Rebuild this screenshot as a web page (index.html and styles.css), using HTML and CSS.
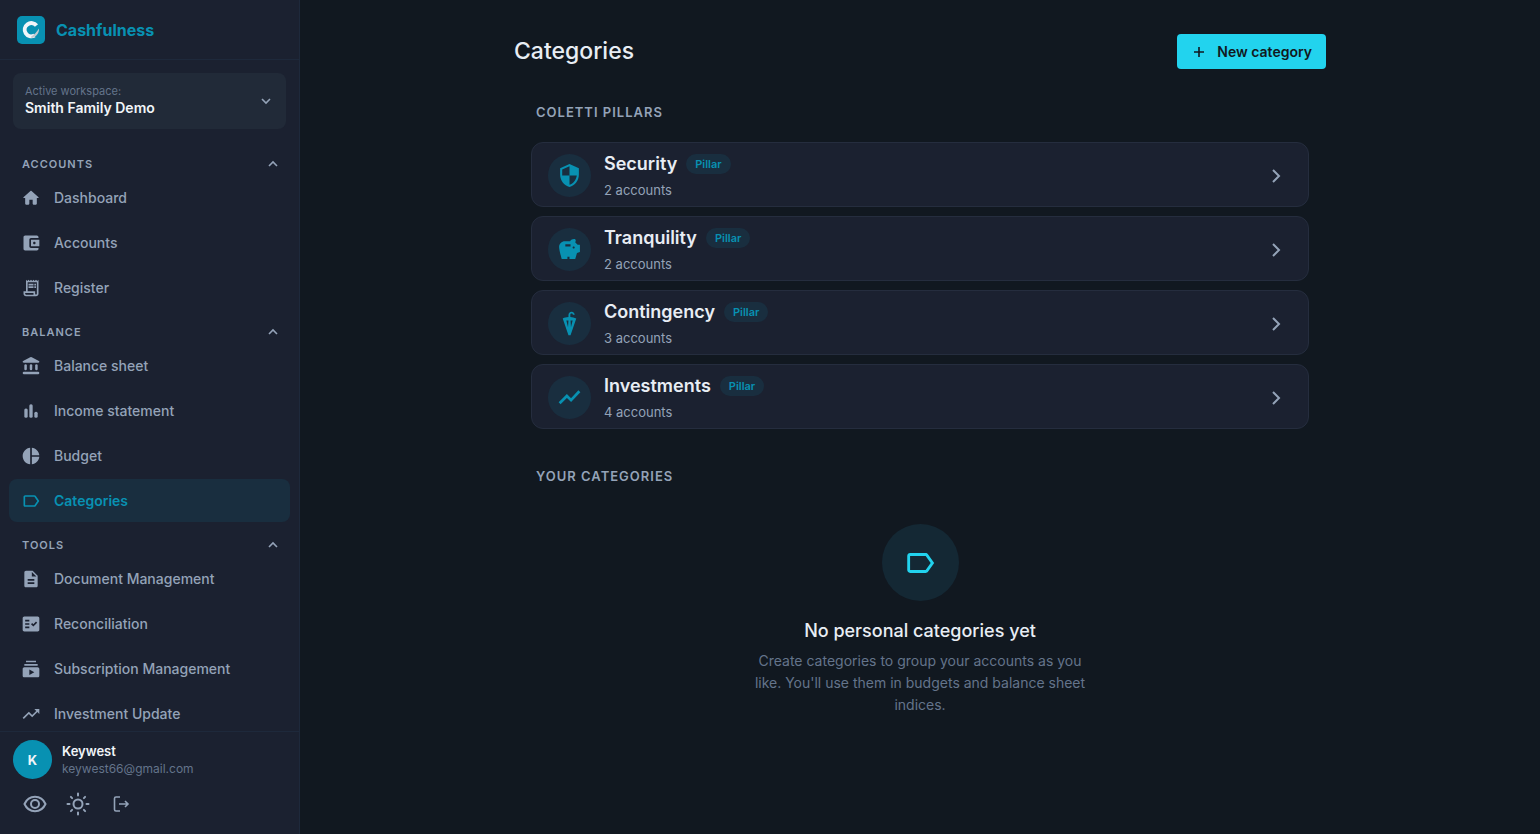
FILE: index.html
```html
<!DOCTYPE html>
<html lang="en">
<head>
<meta charset="utf-8">
<meta name="viewport" content="width=device-width, initial-scale=1">
<title>Categories - Cashfulness</title>
<link rel="stylesheet" href="styles.css">
</head>
<body>
<div class="app">
  <aside class="sidebar">
    <a class="brand" href="#">
      <svg class="brand-logo" viewBox="0 0 28 28" aria-hidden="true">
        <rect width="28" height="28" rx="5" fill="#0891b2"/>
        <path d="M19.500 9.600A6.600 6.600 0 1 0 17.500 19.500" fill="none" stroke="#f1f5f9" stroke-width="4"/>
        <path d="M22 12.500c.2 4.500-2.500 8.500-7.500 9.700l-.3-1.700c3-1.500 5.500-4.500 7.800-8z" fill="#c3cad1"/>
      </svg>
      <span class="brand-name">Cashfulness</span>
    </a>

    <button class="workspace" type="button">
      <span class="workspace-text">
        <span class="workspace-label">Active workspace:</span>
        <span class="workspace-name">Smith Family Demo</span>
      </span>
      <svg class="icon-small" viewBox="0 0 16 16" aria-hidden="true"><path class="line thin" d="M4 6l4 4 4-4"/></svg>
    </button>

    <nav class="nav" aria-label="Main">
      <button class="group-title" type="button"><span>ACCOUNTS</span><svg class="icon-small" viewBox="0 0 16 16" aria-hidden="true"><path class="line thin" d="M4 10l4-4 4 4"/></svg></button>
      <a class="nav-item" href="#"><svg class="icon" viewBox="0 0 24 24" aria-hidden="true"><path d="M10 19v-5h4v5c0 .55.45 1 1 1h3c.55 0 1-.45 1-1v-7h1.700c.46 0 .68-.57.33-.87L12.670 3.600c-.38-.34-.96-.34-1.340 0l-8.360 7.530c-.34.300-.13.870.33.870H5v7c0 .55.45 1 1 1h3c.55 0 1-.45 1-1z"/></svg>Dashboard</a>
      <a class="nav-item" href="#"><svg class="icon" viewBox="0 0 24 24" aria-hidden="true"><path d="M21 18v1c0 1.100-.9 2-2 2H5c-1.110 0-2-.9-2-2V5c0-1.100.89-2 2-2h14c1.100 0 2 .9 2 2v1h-9c-1.110 0-2 .9-2 2v8c0 1.100.89 2 2 2h9zm-9-2h10V8H12v8zm4-2.500c-.83 0-1.500-.67-1.500-1.500s.67-1.500 1.500-1.500 1.500.67 1.500 1.500-.67 1.500-1.500 1.500z"/></svg>Accounts</a>
      <a class="nav-item" href="#"><svg class="icon" viewBox="0 0 24 24" aria-hidden="true"><path d="M19.500 3.500L18 2l-1.500 1.500L15 2l-1.500 1.500L12 2l-1.500 1.500L9 2 7.500 3.500 6 2v14H3v3c0 1.660 1.340 3 3 3h12c1.660 0 3-1.340 3-3V2l-1.500 1.500zM15 20H6c-.55 0-1-.45-1-1v-1h10v2zm4-1c0 .55-.45 1-1 1s-1-.45-1-1v-3H8V5h11v14zM9 7h6v2H9zM16 7h2v2h-2zM9 10h6v2H9zM16 10h2v2h-2z"/></svg>Register</a>

      <button class="group-title" type="button"><span>BALANCE</span><svg class="icon-small" viewBox="0 0 16 16" aria-hidden="true"><path class="line thin" d="M4 10l4-4 4 4"/></svg></button>
      <a class="nav-item" href="#"><svg class="icon" viewBox="0 0 24 24" aria-hidden="true"><rect x="4" y="10" width="3" height="7" rx="1.500"/><rect x="10.500" y="10" width="3" height="7" rx="1.500"/><rect x="17" y="10" width="3" height="7" rx="1.500"/><rect x="2" y="19" width="20" height="3" rx="1.500"/><path d="M11.070 1.490L2.530 5.980C2.200 6.150 2 6.490 2 6.860 2 7.490 2.510 8 3.140 8h17.720C21.490 8 22 7.490 22 6.860c0-.37-.2-.71-.53-.88l-8.540-4.490a2 2 0 0 0-1.860 0z"/></svg>Balance sheet</a>
      <a class="nav-item" href="#"><svg class="icon" viewBox="0 0 24 24" aria-hidden="true"><rect x="4" y="9" width="4" height="11" rx="1.800"/><rect x="10" y="4" width="4" height="16" rx="1.800"/><rect x="16" y="13" width="4" height="7" rx="1.800"/></svg>Income statement</a>
      <a class="nav-item" href="#"><svg class="icon" viewBox="0 0 24 24" aria-hidden="true"><path d="M11 2v20c-5.070-.5-9-4.790-9-10s3.930-9.500 9-10zm2.030 0v8.990H22c-.47-4.740-4.240-8.520-8.970-8.990zm0 11.010V22c4.740-.47 8.500-4.250 8.970-8.990h-8.970z"/></svg>Budget</a>
      <a class="nav-item active" href="#" aria-current="page"><svg class="icon" viewBox="0 0 24 24" aria-hidden="true"><path d="M17.630 5.840C17.270 5.330 16.670 5 16 5L5 5.010C3.900 5.010 3 5.900 3 7v10c0 1.100.9 1.990 2 1.990L16 19c.67 0 1.270-.33 1.630-.84L22 12l-4.370-6.160zM16 17H5V7h11l3.550 5L16 17z"/></svg>Categories</a>

      <button class="group-title" type="button"><span>TOOLS</span><svg class="icon-small" viewBox="0 0 16 16" aria-hidden="true"><path class="line thin" d="M4 10l4-4 4 4"/></svg></button>
      <a class="nav-item" href="#"><svg class="icon" viewBox="0 0 24 24" aria-hidden="true"><path d="M14 2H6c-1.100 0-1.990.9-1.990 2L4 20c0 1.100.89 2 1.990 2H18c1.100 0 2-.9 2-2V8l-6-6zm2 16H8v-2h8v2zm0-4H8v-2h8v2zm-3-5V3.500L18.500 9H13z"/></svg>Document Management</a>
      <a class="nav-item" href="#"><svg class="icon" viewBox="0 0 24 24" aria-hidden="true"><path d="M20 3H4c-1.100 0-2 .9-2 2v14c0 1.100.9 2 2 2h16c1.100 0 2-.9 2-2V5c0-1.100-.9-2-2-2zM10 17H5v-2h5v2zm0-4H5v-2h5v2zm0-4H5V7h5v2zm4.820 6L12 12.160l1.410-1.410 1.410 1.420L17.990 9l1.420 1.420L14.820 15z"/></svg>Reconciliation</a>
      <a class="nav-item" href="#"><svg class="icon" viewBox="0 0 24 24" aria-hidden="true"><path d="M20 8H4V6h16v2zm-2-6H6v2h12V2zm4 10v8c0 1.100-.9 2-2 2H4c-1.100 0-2-.9-2-2v-8c0-1.100.9-2 2-2h16c1.100 0 2 .9 2 2zm-6 4l-6-3.270v6.530L16 16z"/></svg>Subscription Management</a>
      <a class="nav-item" href="#"><svg class="icon" viewBox="0 0 24 24" aria-hidden="true"><path d="M16 6l2.290 2.290-4.880 4.880-4-4L2 16.590 3.410 18l6-6 4 4 6.300-6.290L22 12V6z"/></svg>Investment Update</a>
    </nav>

    <div class="account">
      <div class="user">
        <span class="avatar">K</span>
        <span class="user-text">
          <span class="user-name">Keywest</span>
          <span class="user-mail">keywest66@gmail.com</span>
        </span>
      </div>
      <div class="tools">
        <button class="tool" type="button" aria-label="Hide amounts"><svg class="icon-tool" viewBox="0 0 24 24" aria-hidden="true"><path class="line" d="M1.500 12C3.600 7.300 7.500 4.800 12 4.800S20.400 7.300 22.500 12C20.400 16.700 16.500 19.200 12 19.200S3.600 16.700 1.500 12z"/><circle class="line" cx="12" cy="12" r="4"/></svg></button>
        <button class="tool" type="button" aria-label="Light theme"><svg class="icon-tool" viewBox="0 0 24 24" aria-hidden="true"><circle class="line" cx="12" cy="12" r="4.500"/><path class="line round" d="M12 1.500v2M12 20.500v2M1.500 12h2M20.500 12h2M4.900 4.900l1.200 1.200M17.900 17.900l1.200 1.200M4.900 19.100l1.200-1.200M17.900 6.100l1.200-1.200"/></svg></button>
        <button class="tool" type="button" aria-label="Log out"><svg class="icon-exit" viewBox="0 0 18 18" aria-hidden="true"><path class="line thin" d="M8 2H4a1.500 1.500 0 0 0-1.500 1.500v11A1.500 1.500 0 0 0 4 16h4M7 9h9M13 6l3 3-3 3"/></svg></button>
      </div>
    </div>
  </aside>

  <main class="main">
    <div class="page">
      <header class="page-head">
        <h1 class="page-title">Categories</h1>
        <button class="new-button" type="button"><svg class="icon-plus" viewBox="0 0 16 16" aria-hidden="true"><path class="line thin" d="M8 3v10M3 8h10"/></svg>New category</button>
      </header>

      <section class="section">
        <h2 class="section-title">COLETTI PILLARS</h2>
        <div class="cards">
          <a class="card" href="#">
            <span class="card-icon"><svg viewBox="0 0 24 24" aria-hidden="true"><path d="M12 1L3 5v6c0 5.550 3.840 10.740 9 12 5.160-1.260 9-6.450 9-12V5l-9-4zm0 10.990h7c-.53 4.120-3.280 7.790-7 8.940V12H5V6.300l7-3.110v8.800z"/></svg></span>
            <span class="card-text"><span class="card-title">Security <span class="chip">Pillar</span></span><span class="card-sub">2 accounts</span></span>
            <svg class="chevron" viewBox="0 0 20 20" aria-hidden="true"><path class="line" d="M7 4l6 6-6 6"/></svg>
          </a>
          <a class="card" href="#">
            <span class="card-icon"><svg viewBox="0 0 24 24" aria-hidden="true"><path d="M19.830 7.500l-2.270-2.270c.07-.42.18-.81.32-1.150.11-.26.150-.56.090-.87C17.840 2.490 17.140 1.990 16.400 2c-1.590.03-3 .81-3.900 2h-5C4.460 4 2 6.460 2 9.500S4.500 21 4.500 21H10v-2h2v2h5.500l1.680-5.590 2.820-.94V7.500h-2.170zM13 9H8V7h5v2zm3 2c-.55 0-1-.45-1-1s.45-1 1-1 1 .45 1 1-.45 1-1 1z"/></svg></span>
            <span class="card-text"><span class="card-title">Tranquility <span class="chip">Pillar</span></span><span class="card-sub">2 accounts</span></span>
            <svg class="chevron" viewBox="0 0 20 20" aria-hidden="true"><path class="line" d="M7 4l6 6-6 6"/></svg>
          </a>
          <a class="card" href="#">
            <span class="card-icon"><svg viewBox="0 0 24 24" aria-hidden="true"><path fill-rule="evenodd" d="M5.500 7.200C7.200 6.300 9 5.900 11 5.800V3.800C11 2 12.300.7 14 .7s3 1.300 3 3h-1.800c0-.7-.5-1.200-1.200-1.200s-1.200.5-1.200 1.200v2.100c2 .1 3.900.6 5.700 1.400L13 23.300h-2zM9 9.200l1.600 6.500.4-6.700zM13 9l.4 6.700L15 9.200z"/></svg></span>
            <span class="card-text"><span class="card-title">Contingency <span class="chip">Pillar</span></span><span class="card-sub">3 accounts</span></span>
            <svg class="chevron" viewBox="0 0 20 20" aria-hidden="true"><path class="line" d="M7 4l6 6-6 6"/></svg>
          </a>
          <a class="card" href="#">
            <span class="card-icon"><svg viewBox="0 0 24 24" aria-hidden="true"><path class="line bold" d="M2.500 17.500l7-7 4 4 8-8.500"/></svg></span>
            <span class="card-text"><span class="card-title">Investments <span class="chip">Pillar</span></span><span class="card-sub">4 accounts</span></span>
            <svg class="chevron" viewBox="0 0 20 20" aria-hidden="true"><path class="line" d="M7 4l6 6-6 6"/></svg>
          </a>
        </div>
      </section>

      <section class="section">
        <h2 class="section-title">YOUR CATEGORIES</h2>
        <div class="empty">
          <span class="empty-icon"><svg viewBox="0 0 24 24" aria-hidden="true"><path d="M17.630 5.840C17.270 5.330 16.670 5 16 5L5 5.010C3.900 5.010 3 5.900 3 7v10c0 1.100.9 1.990 2 1.990L16 19c.67 0 1.270-.33 1.630-.84L22 12l-4.370-6.160zM16 17H5V7h11l3.550 5L16 17z"/></svg></span>
          <h3 class="empty-title">No personal categories yet</h3>
          <p class="empty-text">Create categories to group your accounts as you like. You'll use them in budgets and balance sheet indices.</p>
        </div>
      </section>
    </div>
  </main>
</div>
</body>
</html>
```
FILE: styles.css
```css
*, *::before, *::after { box-sizing: border-box; }

body {
  margin: 0;
  background: #111820;
  color: #e8edf4;
  font-family: Inter, "Liberation Sans", sans-serif;
  font-size: 14px;
}

button { font: inherit; color: inherit; background: none; border: 0; padding: 0; cursor: pointer; }
a { color: inherit; text-decoration: none; }
h1, h2, h3, p { margin: 0; }
svg { display: block; flex: none; fill: currentColor; }
.line { fill: none; stroke: currentColor; stroke-width: 2; }
.thin { stroke-width: 1.6; }
.bold { stroke-width: 2.6; }
.round { stroke-linecap: round; }

.app { display: flex; height: 100vh; }

/* Sidebar */
.sidebar {
  display: flex;
  flex-direction: column;
  flex: none;
  width: 300px;
  background: #1b2130;
  border-right: 1px solid #1e293b;
}

.brand {
  display: flex;
  align-items: center;
  gap: 11px;
  height: 60px;
  padding: 0 17px;
  border-bottom: 1px solid #1e293b;
  color: #0891b2;
  flex: none;
}
.brand-logo { width: 28px; height: 28px; }
.brand-name { font-size: 16px; font-weight: 700; }

.workspace {
  display: flex;
  align-items: center;
  justify-content: space-between;
  flex: none;
  margin: 13px 13px 0;
  padding: 12px;
  border-radius: 8px;
  background: #212a38;
  color: #94a3b8;
  text-align: left;
}
.workspace-text { display: flex; flex-direction: column; }
.workspace-label { font-size: 11px; line-height: 13px; color: #64748b; }
.workspace-name { font-size: 14px; line-height: 19px; font-weight: 600; color: #f1f5f9; }
.icon-small { width: 16px; height: 16px; }

.nav {
  display: flex;
  flex-direction: column;
  flex: 1;
  min-height: 0;
  overflow: hidden;
  padding: 14px 9px 0;
}
.group-title {
  display: flex;
  align-items: center;
  justify-content: space-between;
  flex: none;
  height: 33px;
  padding: 8px 9px 0 13px;
  font-size: 11px;
  font-weight: 600;
  letter-spacing: 1px;
  color: #94a3b8;
}
.nav-item {
  display: flex;
  align-items: center;
  flex: none;
  gap: 13px;
  height: 43px;
  margin-bottom: 2px;
  padding: 0 12px;
  border-radius: 8px;
  font-weight: 500;
  color: #94a3b8;
}
.nav-item.active { background: #192e3f; color: #0891b2; font-weight: 600; }
.icon { width: 20px; height: 20px; }

.account { flex: none; padding: 8px 13px 13px; border-top: 1px solid #1e293b; }
.user { display: flex; align-items: center; gap: 10px; }
.avatar {
  display: grid;
  place-items: center;
  width: 39px;
  height: 39px;
  border-radius: 50%;
  background: #0891b2;
  color: #f1f5f9;
  font-size: 13px;
  font-weight: 700;
}
.user-text { display: flex; flex-direction: column; }
.user-name { font-size: 13px; line-height: 18px; font-weight: 600; color: #f1f5f9; }
.user-mail { font-size: 12px; line-height: 18px; color: #64748b; }
.tools { display: flex; margin-top: 8px; color: #94a3b8; }
.tool { display: grid; place-items: center; width: 43px; height: 34px; }
.icon-tool { width: 24px; height: 24px; }
.icon-exit { width: 18px; height: 18px; }

/* Page */
.main { flex: 1; min-width: 0; overflow: auto; }
.page { max-width: 812px; margin: 0 auto; padding: 34px 0; }
.page-head { display: flex; align-items: center; justify-content: space-between; }
.page-title { font-size: 23px; line-height: 35px; font-weight: 500; }
.new-button {
  display: flex;
  align-items: center;
  gap: 10px;
  height: 35px;
  padding: 0 14px;
  border-radius: 4px;
  background: #22d3ee;
  color: #111820;
  font-weight: 600;
}
.icon-plus { width: 16px; height: 16px; }

.section { padding: 34px 17px 0; }
.section + .section { padding-top: 38px; }
.section-title {
  padding-left: 5px;
  font-size: 13px;
  line-height: 18px;
  font-weight: 600;
  letter-spacing: 1px;
  color: #94a3b8;
}
.cards { display: flex; flex-direction: column; gap: 9px; margin-top: 21px; }
.card {
  display: flex;
  align-items: center;
  gap: 13px;
  height: 65px;
  padding: 2px 22px 0 16px;
  border: 1px solid #252d3e;
  border-radius: 12px;
  background: #1b2130;
}
.card-icon {
  display: grid;
  place-items: center;
  flex: none;
  width: 43px;
  height: 43px;
  border-radius: 50%;
  background: #192e3f;
  color: #0891b2;
}
.card-icon svg { width: 25px; height: 25px; }
.card-text { display: flex; flex-direction: column; gap: 4px; flex: 1; }
.card-title { display: flex; align-items: center; gap: 9px; font-size: 18px; line-height: 24px; font-weight: 600; }
.chip {
  padding: 0 9px;
  border-radius: 10px;
  background: #192e3f;
  color: #0891b2;
  font-size: 11px;
  line-height: 20px;
  font-weight: 600;
}
.card-sub { font-size: 13px; line-height: 20px; color: #94a3b8; }
.chevron { width: 20px; height: 20px; color: #94a3b8; }

.empty { display: flex; flex-direction: column; align-items: center; padding-top: 39px; text-align: center; }
.empty-icon {
  display: grid;
  place-items: center;
  width: 77px;
  height: 77px;
  border-radius: 50%;
  background: #142834;
  color: #22d3ee;
}
.empty-icon svg { width: 34px; height: 34px; }
.empty-title { margin-top: 18px; font-size: 18px; line-height: 24px; font-weight: 500; }
.empty-text { max-width: 350px; margin-top: 7px; line-height: 22px; color: #64748b; }
```
